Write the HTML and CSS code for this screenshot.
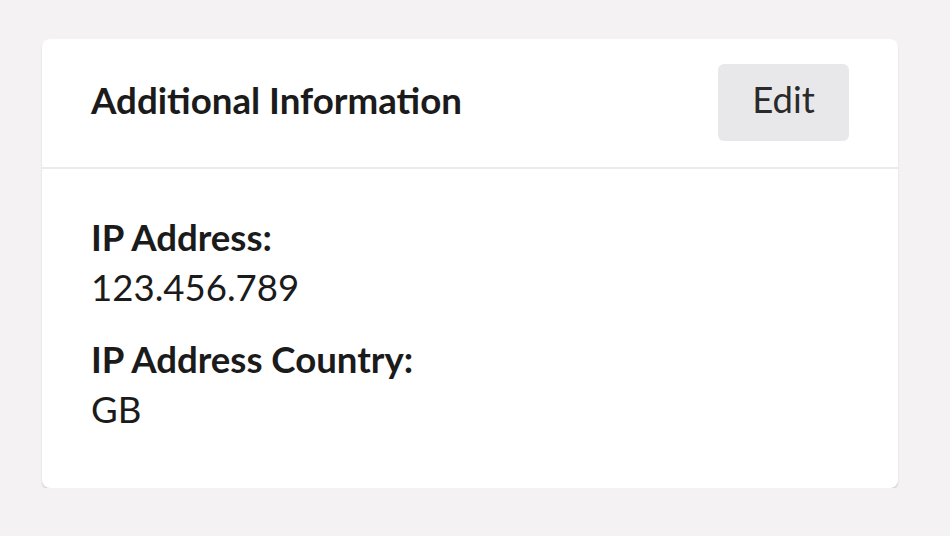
FILE: index.html
```html
<!DOCTYPE html>
<html lang="en">
<head>
<meta charset="utf-8">
<title>Additional Information</title>
<link rel="stylesheet" href="styles.css">
</head>
<body>
<section class="card">
  <header class="card-header">
    <h2 class="card-title">Additional Information</h2>
    <button class="btn-edit" type="button">Edit</button>
  </header>
  <div class="card-body">
    <dl class="field">
      <dt class="field-label">IP Address:</dt>
      <dd class="field-value">123.456.789</dd>
    </dl>
    <dl class="field">
      <dt class="field-label">IP Address Country:</dt>
      <dd class="field-value">GB</dd>
    </dl>
  </div>
</section>
</body>
</html>
```
FILE: styles.css
```css
html, body {
  margin: 0;
  padding: 0;
  background: #f4f2f3;
}
body {
  font-family: Lato, "Open Sans", sans-serif;
  color: #1b1b1b;
  padding: 39px 52px 0 42px;
}
.card {
  background: #fff;
  border-radius: 8px;
  box-shadow: 0 2px 2px rgba(0,0,0,0.14);
  width: 856px;
}
.card-header {
  display: flex;
  align-items: center;
  justify-content: space-between;
  height: 128px;
  padding: 0 49px;
  border-bottom: 2px solid #ebebeb;
}
.card-title {
  margin: 0 0 6px;
  font-size: 36.7px;
  font-weight: 700;
  line-height: 50px;
}
.btn-edit {
  width: 131px;
  height: 77px;
  border: none;
  border-radius: 6px;
  background: #e8e8ea;
  font-family: inherit;
  font-size: 36.5px;
  color: #2a2a2a;
  padding: 0 0 6px;
  margin-top: -2px;
}
.card-body {
  display: flex;
  flex-direction: column;
  gap: 22px;
  padding: 43px 49px 54px;
}
.field {
  margin: 0;
  font-size: 36.6px;
  line-height: 50px;
}
.field-label {
  font-weight: 700;
}
.field-value {
  margin: 0;
  font-weight: 400;
}
```
